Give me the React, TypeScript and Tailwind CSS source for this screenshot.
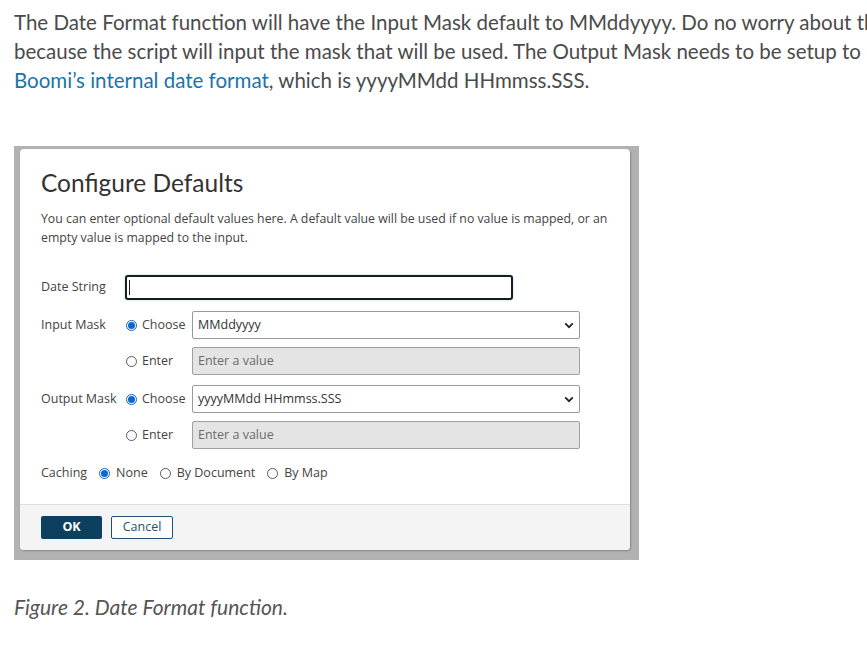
import React from 'react';

const page = { fontFamily: 'Lato, "Open Sans", sans-serif' };
const ui = { fontFamily: '"Open Sans", "Liberation Sans", sans-serif' };

function Radio({ checked }: { checked?: boolean }) {
  return checked ? (
    <span className="inline-flex h-[11px] w-[11px] items-center justify-center rounded-full border border-[#0b66d0] bg-white">
      <span className="h-[7px] w-[7px] rounded-full bg-[#0b66d0]" />
    </span>
  ) : (
    <span className="inline-block h-[11px] w-[11px] rounded-full border border-[#5a5a5a] bg-white" />
  );
}

function Chevron() {
  return (
    <svg width="10" height="7" viewBox="0 0 10 7" className="shrink-0">
      <path d="M1.2 1.4 L5 5.2 L8.8 1.4" fill="none" stroke="#222" strokeWidth="1.8" />
    </svg>
  );
}

function Select({ value }: { value: string }) {
  return (
    <div className="flex h-[28px] w-[388px] items-center justify-between rounded-[2px] border border-[#9a9a9a] bg-white pl-[5px] pr-[5px] text-[12.5px] text-[#333]">
      <span>{value}</span>
      <Chevron />
    </div>
  );
}

function Disabled() {
  return (
    <div className="flex h-[28px] w-[388px] items-center rounded-[2px] border border-[#a0a0a0] bg-[#e4e4e4] pl-[5px] text-[12.5px] text-[#6b6b6b]">
      Enter a value
    </div>
  );
}

function Choice({ checked, label }: { checked?: boolean; label: string }) {
  return (
    <div className="flex w-[66px] items-center gap-[5px] text-[12.5px] text-[#444]">
      <Radio checked={checked} />
      <span>{label}</span>
    </div>
  );
}

function MaskRows({ label, value }: { label: string; value: string }) {
  return (
    <div className="flex flex-col gap-[8px]">
      <div className="flex items-center">
        <div className="w-[85px] text-[12.5px] text-[#444]">{label}</div>
        <Choice checked label="Choose" />
        <Select value={value} />
      </div>
      <div className="flex items-center">
        <div className="w-[85px]" />
        <Choice label="Enter" />
        <Disabled />
      </div>
    </div>
  );
}

export default function App() {
  return (
    <div className="relative h-[656px] w-[867px] overflow-hidden bg-white" style={page}>
      <div className="pl-[14px] pt-[8px] text-[20.5px] leading-[29px] text-[#4b4b4b]">
        <div className="whitespace-nowrap">
          The Date Format function will have the Input Mask default to MMddyyyy. Do no worry about the
        </div>
        <div className="whitespace-nowrap">
          because the script will input the mask that will be used. The Output Mask needs to be setup to use
        </div>
        <div className="whitespace-nowrap">
          <span className="text-[#1a74a8]">Boomi’s internal date format</span>, which is yyyyMMdd HHmmss.SSS.
        </div>
      </div>

      <div className="ml-[14px] mt-[51px] h-[414px] w-[625px] bg-[#b2b2b2] pb-[10px] pl-[6px] pr-[9px] pt-[3px]">
        <div
          className="flex h-[401px] w-[610px] flex-col overflow-hidden rounded-[4px] bg-white shadow-[1px_1px_2px_rgba(0,0,0,0.25)]"
          style={ui}
        >
          <div className="flex-1 pl-[21px] pr-[20px] pt-[19px]">
            <div className="text-[24.5px] leading-[30px] text-[#333]" style={page}>
              Configure Defaults
            </div>
            <div className="mt-[11px] text-[12.3px] leading-[19px] text-[#444]">
              You can enter optional default values here. A default value will be used if no value is mapped, or an
              <br />
              empty value is mapped to the input.
            </div>

            <div className="mt-[28px] flex items-center">
              <div className="w-[84px] text-[12.5px] text-[#444]">Date String</div>
              <div className="flex h-[25px] w-[388px] items-center rounded-[3px] border-2 border-[#1c1c1c] bg-white pl-[2px] shadow-[0_0_3px_rgba(120,190,230,0.6)]">
                <span className="h-[15px] w-px bg-[#222]" />
              </div>
            </div>

            <div className="mt-[11px]">
              <MaskRows label="Input Mask" value="MMddyyyy" />
            </div>
            <div className="mt-[10px]">
              <MaskRows label="Output Mask" value="yyyyMMdd HHmmss.SSS" />
            </div>

            <div className="mt-[15px] flex items-center text-[12.5px] text-[#444]">
              <span className="mr-[12px]">Caching</span>
              <Radio checked />
              <span className="ml-[6px] mr-[12px]">None</span>
              <Radio />
              <span className="ml-[6px] mr-[12px]">By Document</span>
              <Radio />
              <span className="ml-[6px]">By Map</span>
            </div>
          </div>

          <div className="flex h-[46px] items-center gap-[9px] border-t border-[#dedede] bg-[#f4f4f4] pl-[21px]">
            <div className="flex h-[23px] w-[61px] items-center justify-center rounded-[2px] bg-[#0d3f5e] text-[12.5px] font-bold text-white">
              OK
            </div>
            <div className="flex h-[23px] w-[62px] items-center justify-center rounded-[2px] border border-[#24516f] bg-white text-[12.5px] text-[#24516f]">
              Cancel
            </div>
          </div>
        </div>
      </div>

      <div className="mt-[31px] pl-[14px] text-[21px] italic text-[#555]">Figure 2. Date Format function.</div>
    </div>
  );
}
